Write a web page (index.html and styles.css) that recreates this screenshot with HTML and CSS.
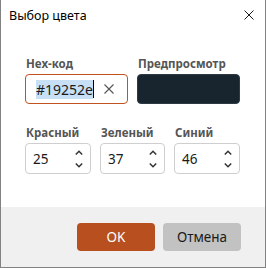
FILE: index.html
```html
<!DOCTYPE html>
<html lang="ru">
<head>
    <meta charset="UTF-8">
    <title>Выбор цвета</title>
    <link rel="stylesheet" href="styles.css">
</head>
<body>
    <div class="dialog">
        <div class="titlebar">
            <span class="title">Выбор цвета</span>
            <svg class="close-btn" width="10" height="10" viewBox="0 0 10 10">
                <path d="M0.5 0.5 L9.5 9.5 M9.5 0.5 L0.5 9.5" stroke="#1a1a1a" stroke-width="1" fill="none"/>
            </svg>
        </div>

        <div class="content">
            <div class="row top-row">
                <div class="field">
                    <label>Hex-код</label>
                    <div class="hex-input">
                        <span class="hex-value"><span class="selected">#19252e</span><span class="caret"></span></span>
                        <svg class="clear-btn" width="10" height="10" viewBox="0 0 10 10">
                            <path d="M0.5 0.5 L9.5 9.5 M9.5 0.5 L0.5 9.5" stroke="#555" stroke-width="1.1" fill="none"/>
                        </svg>
                    </div>
                </div>
                <div class="field">
                    <label>Предпросмотр</label>
                    <div class="preview" id="preview"></div>
                </div>
            </div>

            <div class="row rgb-row">
                <div class="field">
                    <label>Красный</label>
                    <div class="spin"><span>25</span><span class="arrows"></span></div>
                </div>
                <div class="field">
                    <label>Зеленый</label>
                    <div class="spin"><span>37</span><span class="arrows"></span></div>
                </div>
                <div class="field">
                    <label>Синий</label>
                    <div class="spin"><span>46</span><span class="arrows"></span></div>
                </div>
            </div>
        </div>

        <div class="footer">
            <button class="btn btn-ok">OK</button>
            <button class="btn btn-cancel">Отмена</button>
        </div>
    </div>

    <script>
        // стрелки одинаковые во всех полях
        const arrowSvg = '<svg width="8" height="18" viewBox="0 0 8 18">' +
            '<path d="M0.8 4.5 L4 1.3 L7.2 4.5" stroke="#333" stroke-width="1.5" fill="none"/>' +
            '<path d="M0.8 13.5 L4 16.7 L7.2 13.5" stroke="#333" stroke-width="1.5" fill="none"/>' +
            '</svg>';
        document.querySelectorAll('.arrows').forEach(el => el.innerHTML = arrowSvg);
    </script>
</body>
</html>
```

FILE: styles.css
```css
body {
    margin: 0;
    font-family: "Noto Sans", "Open Sans", Arial, sans-serif;
    color: #1a1a1a;
    background-color: #fff;
}
.dialog {
    width: 266px;
    height: 268px;
    box-sizing: border-box;
    border: 1px solid #828282;
    border-top: none;
    display: flex;
    flex-direction: column;
}
.titlebar {
    height: 30px;
    padding: 0 11px 0 8px;
    display: flex;
    align-items: center;
    justify-content: space-between;
}
.title {
    font-size: 12.5px;
    color: #000;
}
.content {
    flex: 1;
    padding: 26px 25px 0 24px;
}
.row {
    display: flex;
}
.top-row {
    gap: 9px;
}
.rgb-row {
    gap: 9px;
    margin-top: 21px;
}
.field {
    display: flex;
    flex-direction: column;
}
.field label {
    font-size: 11.5px;
    font-weight: bold;
    color: #555;
    line-height: 16px;
    height: 16px;
    margin-bottom: 2px;
    padding-left: 1px;
    white-space: nowrap;
}
.hex-input {
    width: 103px;
    height: 30px;
    box-sizing: border-box;
    border: 1px solid #c0531f;
    border-radius: 4px;
    display: flex;
    align-items: center;
    justify-content: space-between;
    padding: 0 13px 0 10px;
}
.hex-value {
    font-size: 14px;
    display: flex;
    align-items: center;
}
.selected {
    background-color: #c8e0f6;
    line-height: 19px;
}
.caret {
    width: 1px;
    height: 18px;
    background-color: #000;
}
.preview {
    width: 103px;
    height: 30px;
    border-radius: 4px;
    background-color: #19252e;
    border: 1px solid #2e3a44;
    box-sizing: border-box;
}
.spin {
    width: 66px;
    height: 31px;
    box-sizing: border-box;
    border: 1px solid #cfcfcf;
    border-radius: 4px;
    display: flex;
    align-items: center;
    justify-content: space-between;
    padding: 0 7px 0 7px;
    font-size: 13.5px;
}
.rgb-row .field:nth-child(2) .spin {
    width: 65px;
}
.arrows {
    display: flex;
}
.footer {
    height: 60px;
    background-color: #f0f0f0;
    display: flex;
    justify-content: flex-end;
    gap: 8px;
    padding: 16px 24px 0 0;
    box-sizing: border-box;
}
.btn {
    width: 78px;
    height: 28px;
    border: none;
    border-radius: 4px;
    font-family: "Noto Sans", "Open Sans", Arial, sans-serif;
    font-size: 13.5px;
}
.btn-ok {
    background-color: #b74f1f;
    color: #fff;
}
.btn-cancel {
    background-color: #c2c2c2;
    color: #1a1a1a;
}
```
